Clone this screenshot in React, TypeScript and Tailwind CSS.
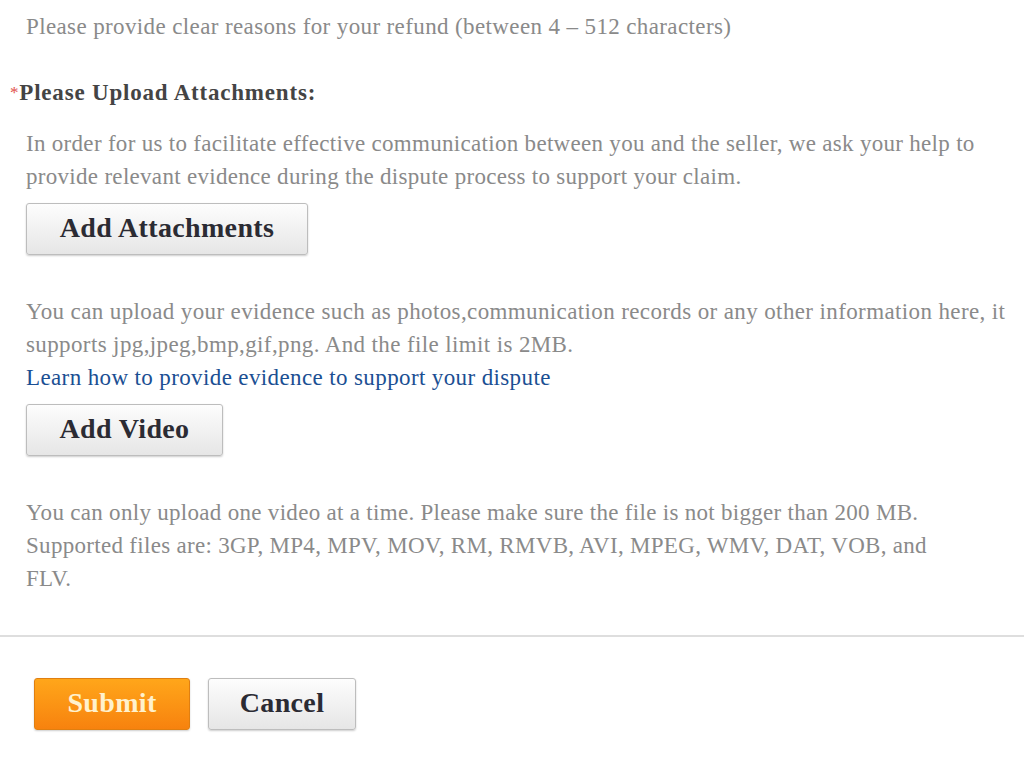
import React from "react";

const para = "text-[#8a8a8a] text-[23px] leading-[33px] tracking-[0.3px] whitespace-nowrap";

function GrayButton({ children, w }: { children: React.ReactNode; w: string }) {
  return (
    <button
      className={`${w} h-[52px] pb-[3px] rounded-[3px] border border-[#bdbdbd] bg-gradient-to-b from-[#fdfdfd] to-[#e6e6e6] shadow-[0_1px_2px_rgba(0,0,0,0.2)] text-[28px] tracking-[0.35px] font-bold text-[#2b2b33] leading-none`}
    >
      {children}
    </button>
  );
}

export default function App() {
  return (
    <div
      className="w-[1024px] h-[758px] bg-white overflow-hidden"
      style={{ fontFamily: '"Liberation Serif", "Times New Roman", serif' }}
    >
      <div className="pl-[26px] pt-[10px]">
        <p className={`${para} tracking-[0.38px]`}>
          Please provide clear reasons for your refund (between 4 – 512 characters)
        </p>
      </div>

      <div className="pl-[10px] mt-[33px] text-[23px] tracking-[0.8px] leading-[33px] font-bold text-[#444444] whitespace-nowrap">
        <span className="text-[#e2504a] font-normal text-[17px] align-top">*</span>
        Please Upload Attachments:
      </div>

      <div className="pl-[26px] mt-[18px]">
        <p className={para}>
          In order for us to facilitate effective communication between you and the seller, we ask your help to
          <br />
          provide relevant evidence during the dispute process to support your claim.
        </p>
        <div className="mt-[10px]">
          <GrayButton w="w-[282px]">Add Attachments</GrayButton>
        </div>
        <p className={`${para} tracking-[0.38px] mt-[40px]`}>
          You can upload your evidence such as photos,communication records or any other information here, it
          <br />
          supports jpg,jpeg,bmp,gif,png. And the file limit is 2MB.
          <br />
          <a className="text-[#1b4f93]">Learn how to provide evidence to support your dispute</a>
        </p>
        <div className="mt-[10px]">
          <GrayButton w="w-[197px]">Add Video</GrayButton>
        </div>
        <p className={`${para} mt-[40px]`}>
          You can only upload one video at a time. Please make sure the file is not bigger than 200 MB.
          <br />
          Supported files are: 3GP, MP4, MPV, MOV, RM, RMVB, AVI, MPEG, WMV, DAT, VOB, and
          <br />
          FLV.
        </p>
      </div>

      <div className="mt-[40px] h-[2px] bg-[#dedede]" />

      <div className="flex gap-[18px] pl-[34px] mt-[41px]">
        <button className="w-[156px] h-[52px] pb-[3px] rounded-[3px] border border-[#e07f10] bg-gradient-to-b from-[#ffa61a] to-[#f7820e] shadow-[0_1px_2px_rgba(0,0,0,0.2)] text-[28px] tracking-[0.35px] font-bold text-[#fff1cc] leading-none">
          Submit
        </button>
        <GrayButton w="w-[148px]">Cancel</GrayButton>
      </div>
    </div>
  );
}
